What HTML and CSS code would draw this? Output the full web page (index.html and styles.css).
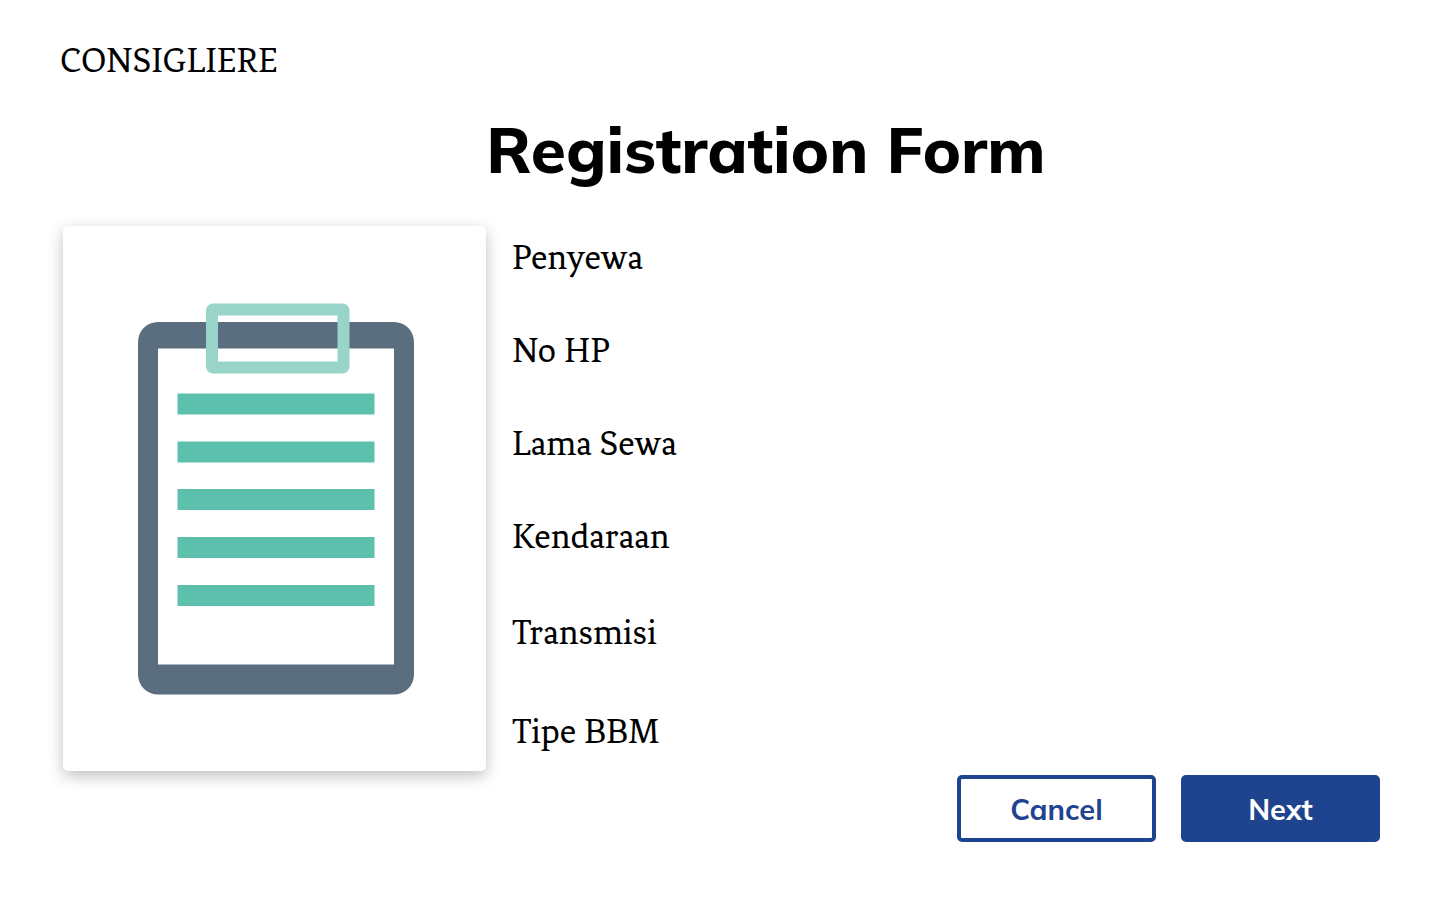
FILE: index.html
```html
<!DOCTYPE html>
<html lang="id">
<head>
<meta charset="utf-8">
<title>Registration Form</title>
<link rel="stylesheet" href="styles.css">
</head>
<body>
<header class="brand">CONSIGLIERE</header>
<main class="page">
  <h1 class="title">Registration Form</h1>
  <div class="content">
    <div class="card">
      <svg class="clipboard" viewBox="0 0 277 392" role="img" aria-label="Clipboard">
        <path fill="#5b6e80" fill-rule="evenodd" d="M20 19H256A20 20 0 0 1 276 39V371.500A20 20 0 0 1 256 391.500H20A20 20 0 0 1 0 371.500V39A20 20 0 0 1 20 19ZM20 45.500V361.500H256V45.500Z"/>
        <rect x="74" y="6.500" width="131.500" height="58" rx="1" fill="none" stroke="#98d5c8" stroke-width="12" stroke-linejoin="round"/>
        <path fill="#5dc0ac" d="M39.500 90.500h197v21h-197zM39.500 138.500h197v21h-197zM39.500 186h197v21h-197zM39.500 234h197v21h-197zM39.500 282h197v21h-197z"/>
      </svg>
    </div>
    <form class="form">
      <ul class="fields">
        <li>Penyewa</li>
        <li>No HP</li>
        <li>Lama Sewa</li>
        <li>Kendaraan</li>
        <li class="transmission">Transmisi</li>
        <li class="fuel">Tipe BBM</li>
      </ul>
      <div class="actions">
        <button class="button" type="button">Cancel</button>
        <button class="button primary" type="submit">Next</button>
      </div>
    </form>
  </div>
</main>
</body>
</html>
```
FILE: styles.css
```css
* { box-sizing: border-box; }
body {
  margin: 0;
  padding: 41px 60px;
  background: #fff;
  color: #000;
  font-family: "Fenix", "Noto Serif", "Liberation Serif", serif;
  font-size: 36px;
  line-height: 40px;
}
.title {
  margin: 28px 0 0;
  padding-left: 92px;
  font: 800 64px/80px "Mulish", "Open Sans", sans-serif;
  text-align: center;
}
.content {
  display: flex;
  align-items: flex-start;
  gap: 26px;
  margin: 37px 0 0 3px;
}
.card {
  flex: 0 0 423px;
  padding: 77px 71px 76px 75px;
  border-radius: 5px;
  box-shadow: 0 5px 15px rgba(0, 0, 0, .25);
}
.clipboard { display: block; width: 277px; height: 392px; }
.form { flex: 1; }
.fields {
  display: flex;
  flex-direction: column;
  gap: 53px;
  margin: 0;
  padding: 12px 0 0;
  list-style: none;
}
.transmission { margin-top: 3px; }
.fuel { margin-top: 6px; }
.actions { display: flex; justify-content: flex-end; gap: 25px; margin-top: 23px; }
.button {
  width: 199px;
  height: 67px;
  border: 4px solid #1f448f;
  border-radius: 5px;
  background: #fff;
  color: #1f448f;
  font: 700 29px/36px "Mulish", "Open Sans", sans-serif;
}
.primary { background: #1f448f; color: #fff; }
```
